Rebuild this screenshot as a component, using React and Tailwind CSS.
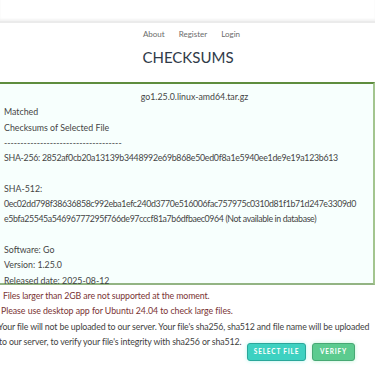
import React from "react";

const lines = [
  { t: "Matched" },
  { t: "Checksums of Selected File" },
  { t: "------------------------------------" },
  { t: "SHA-256: 2852af0cb20a13139b3448992e69b868e50ed0f8a1e5940ee1de9e19a123b613", c: "tracking-[-0.28px]" },
  { t: "" },
  { t: "SHA-512:" },
  { t: "0ec02dd798f38636858c992eba1efc240d3770e516006fac757975c0310d81f1b71d247e3309d0", c: "tracking-[-0.36px]" },
  { t: "e5bfa25545a54696777295f766de97cccf81a7b6dfbaec0964 (Not available in database)", c: "tracking-[-0.37px]" },
  { t: "" },
  { t: "Software: Go" },
  { t: "Version: 1.25.0" },
  { t: "Released date: 2025-08-12" },
];

const App = () => {
  return (
    <div className="w-[375px] h-[366px] overflow-hidden bg-white text-[#454545] font-['Lato','Liberation_Sans',sans-serif]">
      {/* top bar */}
      <div className="h-[23px] border-b-2 border-[#ebebeb] bg-white shadow-[0_-2px_2px_#f4f4f4_inset]"></div>

      {/* nav */}
      <div className="flex justify-center gap-[14px] pt-[5px] text-[8px] text-[#6b6b6b] leading-[12px] pl-[8px]">
        <span>About</span>
        <span>Register</span>
        <span>Login</span>
      </div>

      <h1 className="text-center text-[15px] text-[#2f3a48] leading-[18px] mt-[8px] pl-[1px]">
        CHECKSUMS
      </h1>

      {/* result box */}
      <div className="mt-[16px] -ml-[6px] w-[381px] border-2 border-t-[#5e8d3e] border-r-[#a3c58f] border-b-[#93b483] border-l-[#5e8d3e] bg-[#f7fffd] pl-[8px] pr-[2px] pt-[5px] text-[8.8px] leading-[15.3px] h-[203px]">
        <div className="text-center pl-[14px]">go1.25.0.linux-amd64.tar.gz</div>
        {lines.map((l, i) => (
          <div key={i} className={`whitespace-nowrap h-[15.3px] ${l.c || ""}`}>
            {l.t}
          </div>
        ))}
      </div>

      {/* notes */}
      <div className="pt-[3px] text-[8.8px] leading-[15.3px] whitespace-nowrap">
        <div className="pl-[3px] text-[#7a3434] tracking-[-0.12px]">Files larger than 2GB are not supported at the moment.</div>
        <div className="pl-[1px] text-[#7a3434] tracking-[-0.06px]">Please use desktop app for Ubuntu 24.04 to check large files.</div>
        <div className="-ml-[2px] text-[#3f3f3f] tracking-[-0.15px]">
          Your file will not be uploaded to our server. Your file's sha256, sha512 and file name will be uploaded
        </div>
        <div className="-ml-[1px] text-[#3f3f3f] tracking-[-0.13px]">to our server, to verify your file's integrity with sha256 or sha512.</div>
      </div>

      <div className="flex justify-end gap-[6px] pr-[20px] -mt-[6px]">
        <button className="h-[18px] w-[59px] rounded-[3px] bg-[#3dd1c1] border border-[#2aa79a] text-white text-[6.5px] font-bold tracking-[0.8px] shadow-[0_0_4px_#b6f5ee]">
          SELECT FILE
        </button>
        <button className="h-[18px] w-[43px] rounded-[3px] bg-[#5ccb8f] border border-[#47a874] text-white text-[6.5px] font-bold tracking-[0.8px] shadow-[0_0_4px_#bff2d6]">
          VERIFY
        </button>
      </div>
    </div>
  );
};

export default App;
